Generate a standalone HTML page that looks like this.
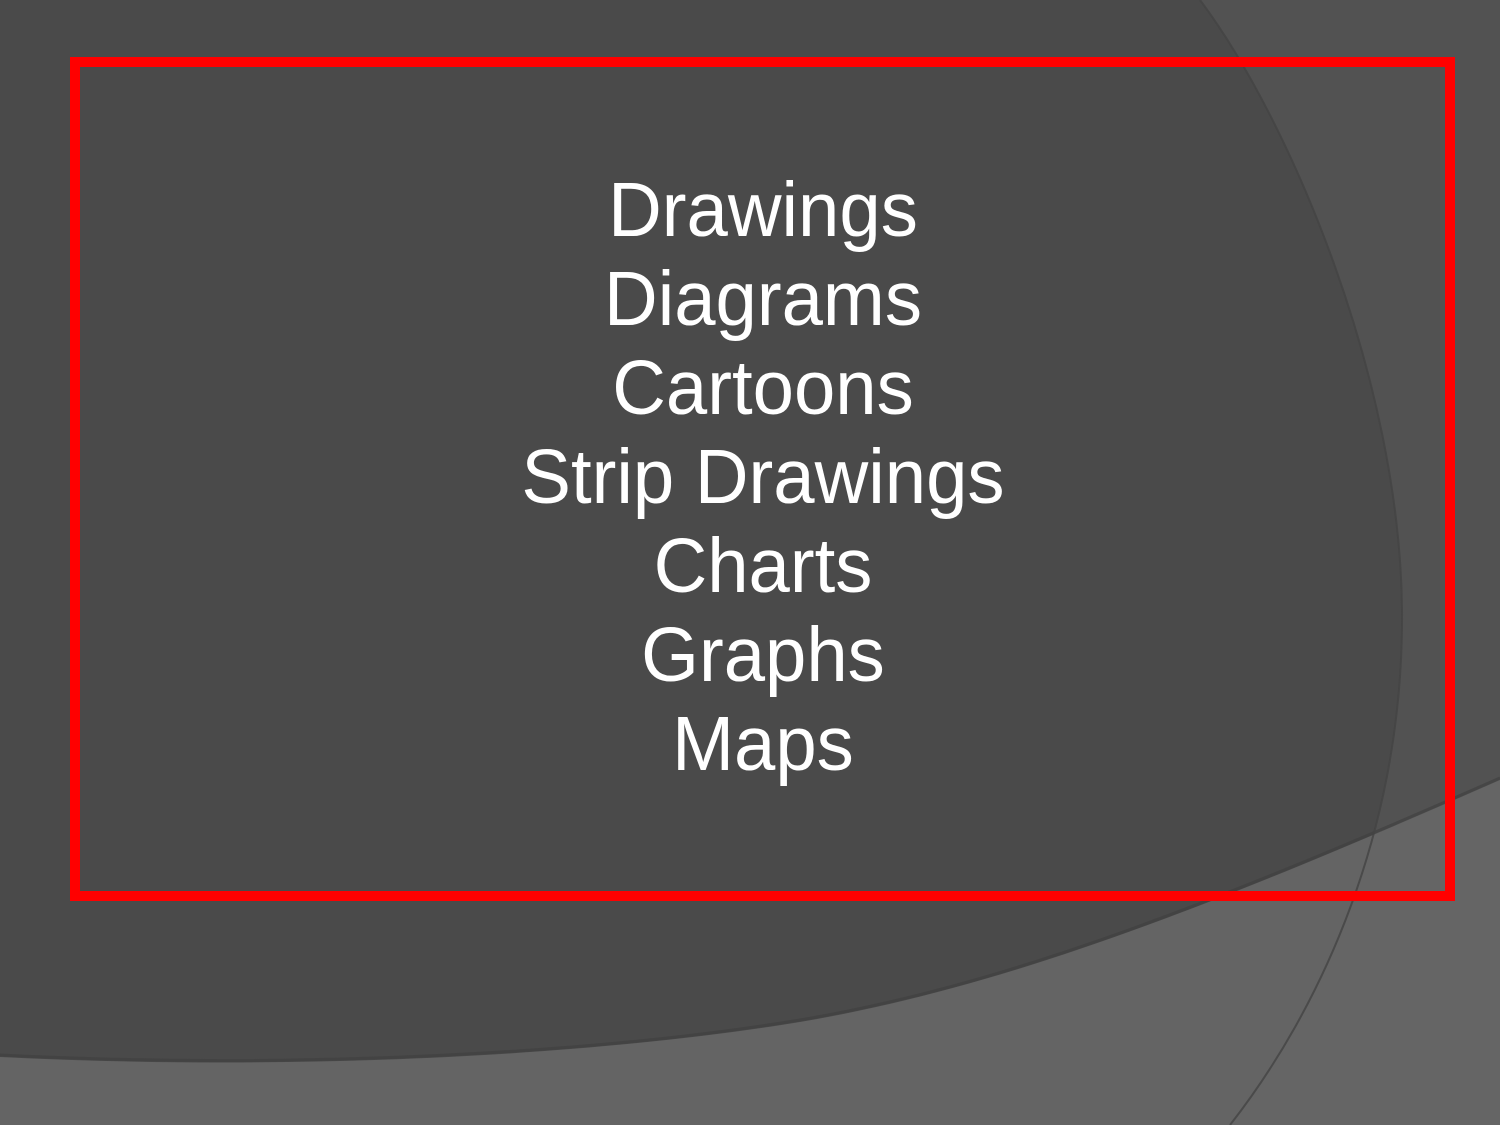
<!DOCTYPE html>
<html><head><style>
html,body{margin:0;padding:0;width:1500px;height:1125px;overflow:hidden;background:#4a4a4a}
svg{position:absolute;left:0;top:0}
.t{position:absolute;left:263px;top:166px;width:1000px;text-align:center;color:#fff;font-family:"Liberation Sans",sans-serif;font-size:77px;line-height:89px;transform:scaleX(0.965);transform-origin:500px 0}
</style></head><body>
<svg width="1500" height="1125">
<rect width="1500" height="1125" fill="#4a4a4a"/>
<path d="M1200 0 C1290 120 1400 380 1402 610 C1404 830 1320 1010 1230 1125 L1500 1125 L1500 0 Z" fill="#525252"/>
<path d="M0 1057 C300 1072 600 1055 800 1022 C1000 988 1200 912 1500 780 L1500 1125 L0 1125 Z" fill="#666" fill-opacity="0.93"/>
<path d="M0 1055 C300 1070 600 1053 800 1020 C1000 986 1200 910 1500 778" fill="none" stroke="#404040" stroke-width="3" opacity="0.6"/>
<path d="M1200 0 C1290 120 1400 380 1402 610 C1404 830 1320 1010 1230 1125" fill="none" stroke="#444" stroke-width="2" opacity="0.8"/>
<rect x="75" y="62" width="1375" height="834" fill="none" stroke="#ff0000" stroke-width="10"/>
</svg>
<div class="t">Drawings<br>Diagrams<br>Cartoons<br>Strip Drawings<br>Charts<br>Graphs<br>Maps</div>
</body></html>
